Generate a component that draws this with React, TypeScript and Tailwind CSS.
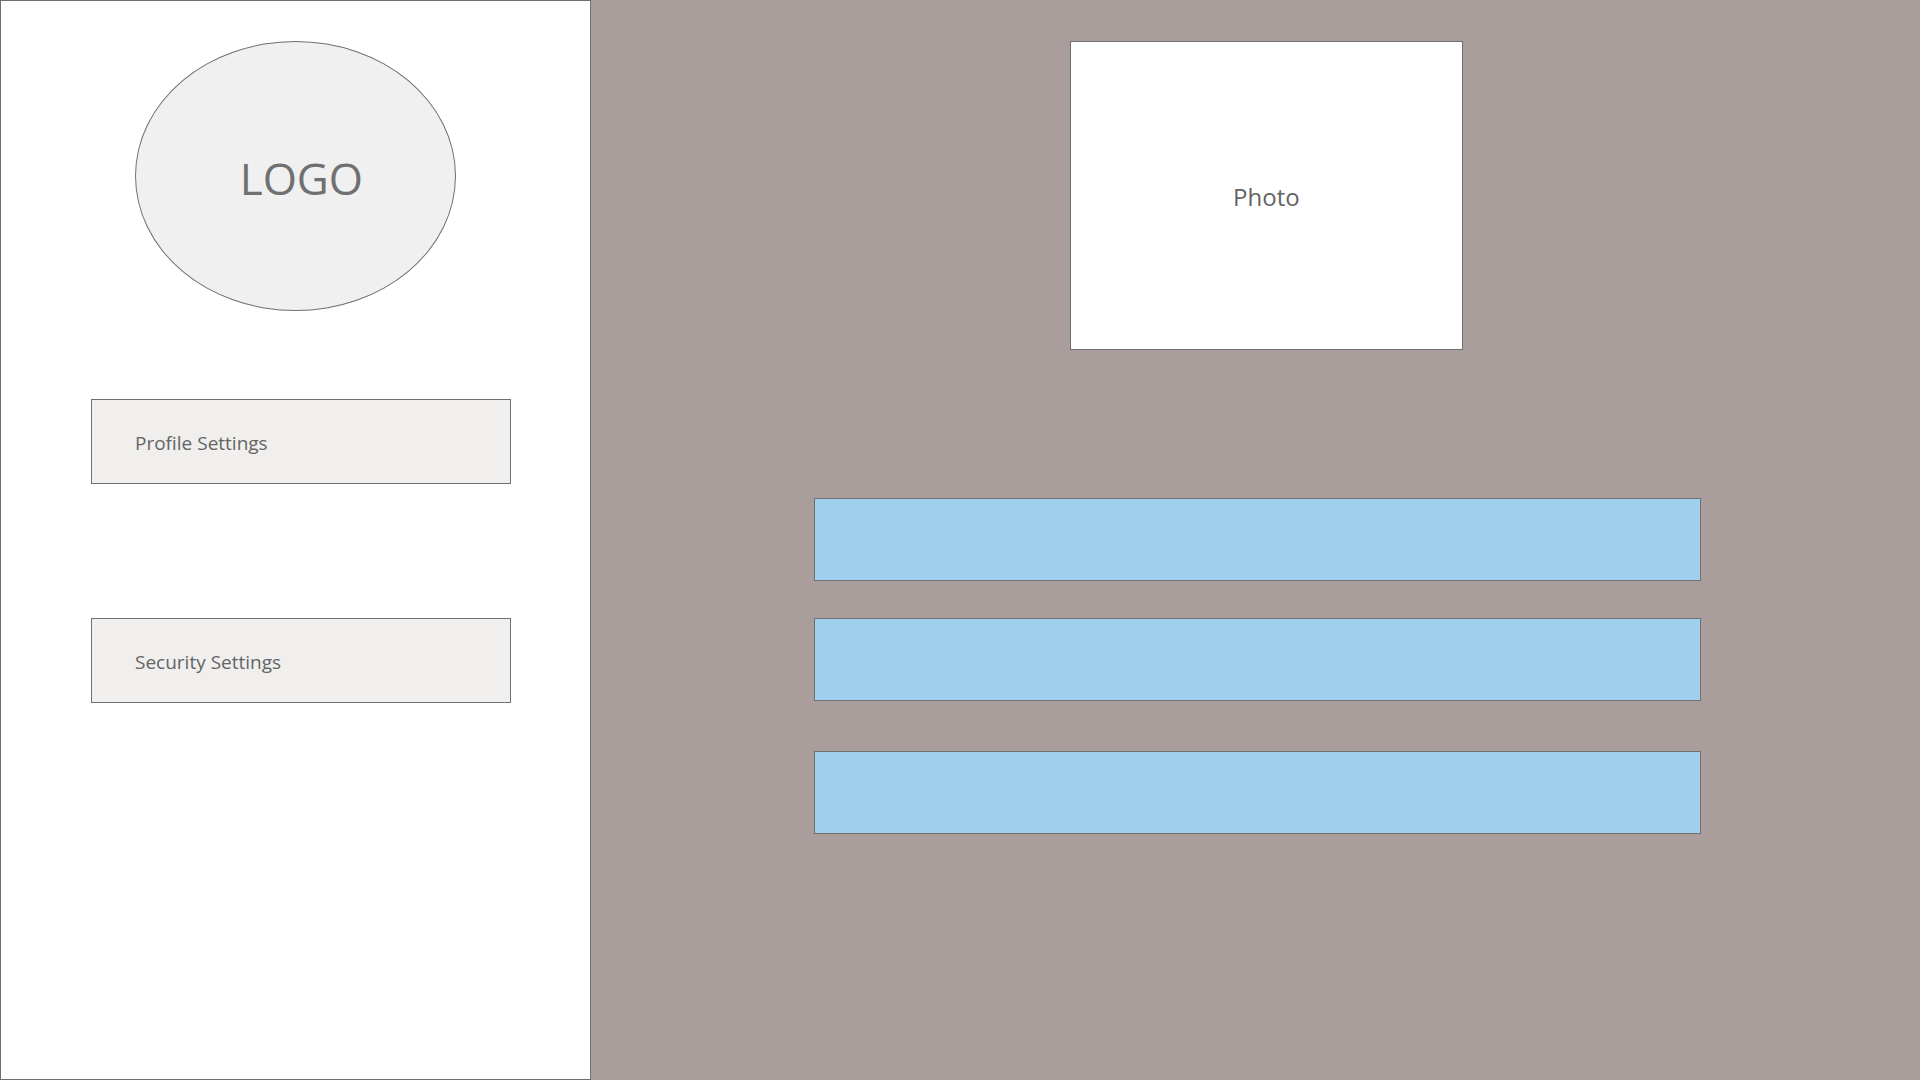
const fields = [
  { id: "field-1", label: "First field", spacing: "mt-[148px]" },
  { id: "field-2", label: "Second field", spacing: "mt-[37px]" },
  { id: "field-3", label: "Third field", spacing: "mt-[50px]" },
];

function NavButton({ children }: { children: string }) {
  return (
    <button
      type="button"
      className="h-[85px] w-full border border-[#707070] bg-[#f0efed] pt-[3px] pl-[43px] text-left text-[19px] text-[#646464]"
    >
      {children}
    </button>
  );
}

function Sidebar() {
  return (
    <aside className="flex flex-col border border-[#707070] bg-white pt-10 pr-[79px] pl-[90px]">
      <div className="mr-[11px] flex h-[270px] w-[321px] max-w-full items-center justify-center self-center rounded-[50%] border border-[#707070] bg-[#f0f0f0] pt-[3px] pl-3 text-[44px] text-[#707070]">
        LOGO
      </div>
      <nav className="mt-[88px] flex flex-col gap-[134px]">
        <NavButton>Profile Settings</NavButton>
        <NavButton>Security Settings</NavButton>
      </nav>
    </aside>
  );
}

export default function App() {
  return (
    <div className="grid min-h-screen grid-cols-[4fr_9fr] bg-[#a99e9b] font-['Open_Sans','Noto_Sans',sans-serif]">
      <Sidebar />
      <main className="flex flex-col items-center pt-[41px] pb-10">
        <div className="ml-[22px] flex h-[309px] w-[393px] max-w-full items-center justify-center border border-[#707070] bg-white pt-[3px] text-[24px] text-[#646464]">
          Photo
        </div>
        <form className="ml-1 flex w-[66.7%] flex-col">
          {fields.map((field) => (
            <input
              key={field.id}
              id={field.id}
              type="text"
              aria-label={field.label}
              className={`h-[83px] w-full border border-[#707070] bg-[#9fd0ee] px-6 text-[19px] text-[#646464] ${field.spacing}`}
            />
          ))}
        </form>
      </main>
    </div>
  );
}
